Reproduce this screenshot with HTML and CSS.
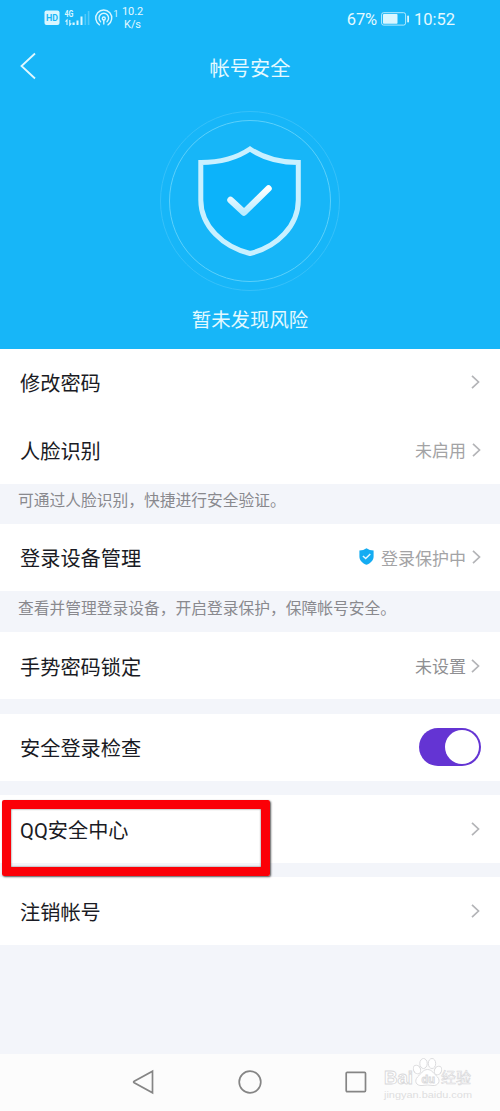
FILE: index.html
```html
<!DOCTYPE html>
<html lang="zh-CN">
<head>
<meta charset="utf-8">
<title>帐号安全</title>
<link rel="stylesheet" href="styles.css">
</head>
<body>
<div class="screen">
  <header class="hero">
    <div class="status">
      <svg class="status-icons" width="76" height="22" viewBox="0 0 76 22">
        <rect x="0.5" y="3.500" width="15" height="14.5" rx="2" fill="#d9f6ff"/>
        <text x="8" y="14.300" class="hd" textLength="12" lengthAdjust="spacingAndGlyphs">HD</text>
        <text x="20.5" y="10.200" class="gen" textLength="9" lengthAdjust="spacingAndGlyphs">4G</text>
        <g fill="none" stroke="#d9f6ff" stroke-width="1.1">
          <path d="M23 18v-5l-1.500 1.600M25.800 13v5l1.500-1.600"/>
        </g>
        <path d="M28.500 15.500h2.200v2.500h-2.200zM32.500 13.500h2v4.500h-2zM36.500 9.500h2v8.500h-2z" fill="#d9f6ff"/>
        <path d="M40.500 7h1.600v11h-1.600zM43.800 4h1.600v14h-1.600z" fill="#d9f6ff" opacity=".3"/>
        <g fill="none" stroke="#d9f6ff" stroke-width="1.400" stroke-linecap="round">
          <path d="M55.500 17.800a8 8 0 1 1 8.500 0"/>
          <path d="M56.600 14.700a4.800 4.800 0 1 1 6.400 0"/>
          <circle cx="59.800" cy="11.500" r="1.500"/>
          <path d="M59.800 13v4"/>
        </g>
        <text x="69.300" y="10.300" class="sup">1</text>
      </svg>
      <div class="speed"><span>10.2</span><span>K/s</span></div>
      <div class="status-right">
        <span class="pct">67%</span>
        <svg width="29" height="14" viewBox="0 0 29 14">
          <rect x=".6" y=".7" width="24" height="12.400" rx="2" fill="none" stroke="#d9f6ff" stroke-width="1" opacity=".8"/>
          <rect x="2" y="2" width="14.500" height="9.800" rx=".8" fill="#d9f6ff"/>
          <rect x="26.200" y="3.500" width="1.800" height="7" rx=".8" fill="#d9f6ff"/>
        </svg>
        <span class="clock">10:52</span>
      </div>
    </div>
    <div class="titlebar">
      <svg class="back" width="18" height="28" viewBox="0 0 18 28"><path d="M15 1.500L1.500 14l13.500 12.500" fill="none" stroke="#e0f8ff" stroke-width="1.800"/></svg>
      <h1>帐号安全</h1>
    </div>
    <svg class="emblem" width="182" height="182" viewBox="0 0 182 182">
      <defs>
        <linearGradient id="tick" x1="0" y1="0" x2="0" y2="1"><stop offset="0" stop-color="#fff"/><stop offset="1" stop-color="#bcecff"/></linearGradient>
      </defs>
      <circle cx="91" cy="91" r="89.500" fill="none" stroke="#36c1fa"/>
      <circle cx="91" cy="91" r="80.500" fill="none" stroke="#5bd0fb"/>
      <path d="M91 39Q111 52.500 139.300 52.500V90C139.300 116 118 137 91 143.500C64 137 41.800 116 41.800 90V52.500Q71 52.500 91 39Z" fill="#0cb3fa" stroke="#c9f0ff" stroke-width="5"/>
      <path d="M71.500 90L85 102.500L109.500 78.500" fill="none" stroke="url(#tick)" stroke-width="6.500" stroke-linecap="round" stroke-linejoin="round"/>
    </svg>
    <p class="verdict">暂未发现风险</p>
  </header>

  <main class="settings">
    <div class="row"><span class="label">修改密码</span><svg class="chev" viewBox="0 0 9 14"><path d="M1 .8L7.500 7L1 13.200"/></svg></div>
    <div class="row near"><span class="label">人脸识别</span><span class="value">未启用</span><svg class="chev" viewBox="0 0 9 14"><path d="M1 .8L7.500 7L1 13.200"/></svg></div>
    <p class="hint">可通过人脸识别，快捷进行安全验证。</p>
    <div class="row near"><span class="label">登录设备管理</span>
      <svg class="guard" width="15" height="17" viewBox="0 0 15 17"><path d="M7.500 .2Q10.500 2.500 14.600 2.500V8.500C14.600 12.500 11.500 15.300 7.500 16.800C3.500 15.300 .4 12.500 .4 8.500V2.500Q4.500 2.500 7.500 .2Z" fill="#14acf2"/><path d="M3.900 8L6.700 10.500L11.300 6" fill="none" stroke="#e5f7ff" stroke-width="1.500"/></svg>
      <span class="value">登录保护中</span><svg class="chev" viewBox="0 0 9 14"><path d="M1 .8L7.500 7L1 13.200"/></svg></div>
    <p class="hint tall">查看并管理登录设备，开启登录保护，保障帐号安全。</p>
    <div class="row"><span class="label">手势密码锁定</span><span class="value dark">未设置</span><svg class="chev" viewBox="0 0 9 14"><path d="M1 .8L7.500 7L1 13.200"/></svg></div>
    <div class="row spaced"><span class="label">安全登录检查</span><span class="toggle"><i></i></span></div>
    <div class="row spaced"><span class="label">QQ安全中心</span><svg class="chev" viewBox="0 0 9 14"><path d="M1 .8L7.500 7L1 13.200"/></svg><div class="marker"></div></div>
    <div class="row spaced"><span class="label">注销帐号</span><svg class="chev" viewBox="0 0 9 14"><path d="M1 .8L7.500 7L1 13.200"/></svg></div>
  </main>

  <nav class="navbar">
    <svg width="24" height="26" viewBox="0 0 24 26"><path d="M20.500 2.200V23.800L2.200 13.800Q1 13 2.200 12.200Z"/></svg>
    <svg width="26" height="26" viewBox="0 0 26 26"><circle cx="13" cy="13" r="10.800"/></svg>
    <svg width="24" height="26" viewBox="0 0 24 26"><rect x="2.200" y="3.300" width="19.300" height="19.300" rx="1"/></svg>
    <svg class="watermark" width="96" height="46" viewBox="0 0 96 46">
      <g fill="#fff" stroke="#d8d8da" stroke-width=".9">
        <ellipse cx="37" cy="13.500" rx="3.500" ry="4.500" transform="rotate(-25 37 13.500)"/>
        <ellipse cx="43.500" cy="7.500" rx="3.700" ry="5"/>
        <ellipse cx="52" cy="7.500" rx="3.700" ry="5"/>
        <ellipse cx="58" cy="14.500" rx="3.500" ry="4.500" transform="rotate(25 58 14.500)"/>
        <path d="M47.500 13.500C52 13.500 54 18 57.500 21C61 25 58 30 53 29.500Q47.500 28.500 42 29.500C36 30 34 25 37.500 21C41 18 43 13.500 47.500 13.500Z"/>
        <text x="4" y="28" class="wm-big" textLength="29" lengthAdjust="spacingAndGlyphs">Bai</text>
        <text x="41.500" y="27" class="wm-du">du</text>
        <text x="61" y="26.500" class="wm-cjk" textLength="30" lengthAdjust="spacingAndGlyphs">经验</text>
      </g>
      <text x="4" y="41.500" class="wm-url" textLength="88" lengthAdjust="spacingAndGlyphs">jingyan.baidu.com</text>
    </svg>
  </nav>
</div>
</body>
</html>
```
FILE: styles.css
```css
* { box-sizing: border-box; margin: 0; padding: 0; }
body {
  width: 500px;
  font-family: Roboto, "Noto Sans CJK SC", sans-serif;
  background: #f3f5fa;
}
.screen { width: 500px; height: 1111px; display: flex; flex-direction: column; background: #f3f5fa; overflow: hidden; }
svg { display: block; flex: none; }

.hero { height: 348.500px; background: #17b6f8; color: #e4f9ff; display: flex; flex-direction: column; align-items: center; flex: none; }
.status { width: 100%; height: 38px; padding: 7px 45px 0 43.500px; display: flex; align-items: flex-start; }
.hd { font: bold 9px Roboto, sans-serif; fill: #17b6f8; text-anchor: middle; }
.gen { font: bold 8.500px Roboto, sans-serif; fill: #d9f6ff; }
.sup { font: 9.500px Roboto, sans-serif; fill: #d9f6ff; }
.speed { width: 28px; margin: -1px 0 0 -1px; display: flex; flex-direction: column; align-items: center; font-size: 11px; line-height: 12.500px; letter-spacing: -.1px; }
.status-right { margin-left: auto; display: flex; align-items: center; height: 24px; font-size: 16.500px; }
.pct { margin-right: 4px; letter-spacing: -.2px; }
.clock { margin-left: 4px; }
.titlebar { width: 100%; height: 58px; display: grid; grid-template-columns: 60px 1fr 60px; align-items: center; }
.back { margin-left: 20px; margin-top: -2px; }
h1 { font-size: 20.200px; font-weight: 400; text-align: center; line-height: 30px; padding-top: 3px; }
.emblem { margin-top: 13.500px; }
.verdict { margin-top: 14px; font-size: 19.400px; line-height: 30px; }

.settings { display: flex; flex-direction: column; flex: 1; }
.row { position: relative; height: 67.600px; flex: none; padding: 0 20px; background: #fff; display: flex; align-items: center; }
.near { padding-right: 19px; }
.spaced { margin-top: 14.200px; }
.label { font-size: 20.200px; line-height: 30px; color: #1a1b24; margin-right: auto; padding-top: 4px; }
.value { font-size: 17px; line-height: 26px; color: #a3a3a5; margin-right: 6px; padding-top: 3px; }
.dark { color: #8f8f92; margin-right: 5px; }
.chev { width: 9px; height: 14px; fill: none; stroke: #b3b4b7; stroke-width: 1.700; }
.guard { margin-right: 7px; margin-top: -1px; }
.hint { height: 40px; flex: none; padding: 5px 18px 0; font-size: 15.750px; line-height: 24px; color: #89898e; white-space: nowrap; }
.tall { height: 40.500px; padding-top: 6px; }
.toggle { width: 62px; height: 38px; margin-right: -1px; border-radius: 19px; background: #6434d3; padding: 2px; display: flex; justify-content: flex-end; }
.toggle i { width: 34px; height: 34px; border-radius: 50%; background: #fff; }
.marker { position: absolute; left: 2px; top: 5px; width: 268px; height: 76px; border: 9px solid #fb0007; border-radius: 2px; box-shadow: 1px 1px 2px rgba(0,0,0,.65), inset 0 0 2px rgba(0,0,0,.65); z-index: 1; }

.navbar { position: relative; height: 57.500px; flex: none; background: #fcfcfc; padding: 0 132px; display: flex; justify-content: space-between; align-items: center; }
.navbar > svg:not(.watermark) { fill: none; stroke: #858585; stroke-width: 1.700; }
.navbar > .watermark { position: absolute; left: 380px; top: 2px; }
.wm-big { font: bold 19px "Liberation Sans", sans-serif; }
.wm-du { font: bold 11px "Liberation Sans", sans-serif; }
.wm-cjk { font: 15px "Noto Sans CJK SC", sans-serif; stroke-width: .6; }
.wm-url { font: 9.500px "Liberation Sans", sans-serif; fill: #dededf; }
```
